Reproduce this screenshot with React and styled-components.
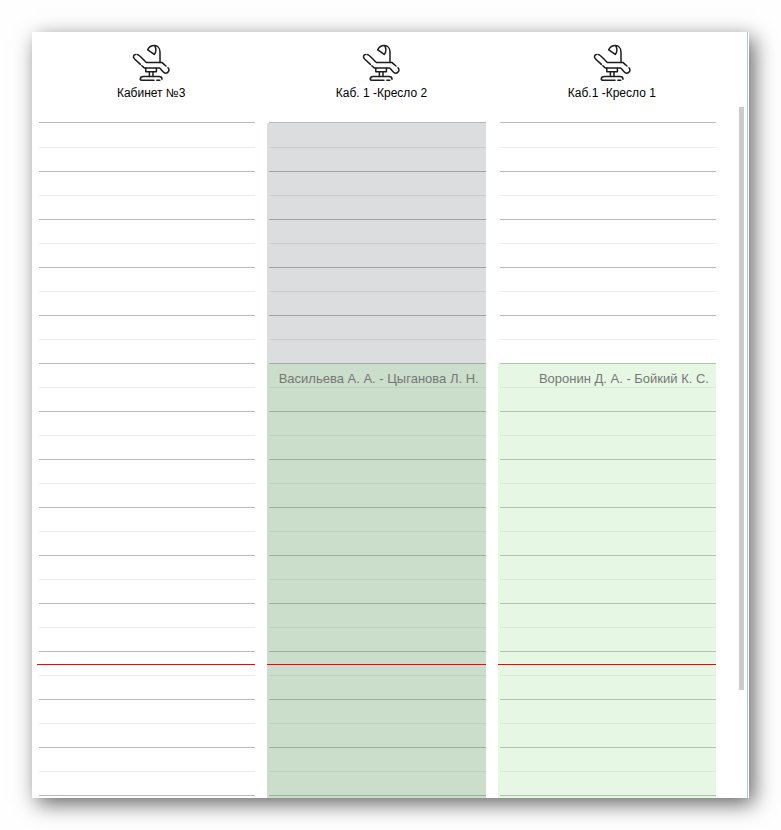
import React from 'react'
import styled, { createGlobalStyle } from 'styled-components'

const GlobalStyle = createGlobalStyle`
    * {
        box-sizing: border-box;
    }
    body {
        margin: 0;
        background-color: #fefefe;
        font-family: "Liberation Sans", Arial, sans-serif;
    }
`
const Page = styled.div`
    height: 100vh;
    padding: 32px;
`
const Panel = styled.main`
    height: 100%;
    display: flex;
    flex-direction: column;
    overflow: hidden;
    background-color: white;
    box-shadow: 5px 6px 20px rgba(0, 0, 0, 0.6);
`
const Inner = styled.div`
    flex: 1;
    min-height: 0;
    display: flex;
    flex-direction: column;
    margin-right: 1px;
    border-right: 1px solid #a9c8ee;
`
const Header = styled.header`
    height: 75px;
    flex-shrink: 0;
    display: grid;
    grid-template-columns: repeat(3, 1fr);
    gap: 12px;
    padding: 12px 26px 0 10px;
`
const RoomHead = styled.div`
    display: flex;
    flex-direction: column;
    align-items: center;
`
const RoomName = styled.h2`
    margin: 3px 0 0;
    font-size: 12px;
    line-height: 16px;
    font-weight: 400;
    color: black;
    white-space: nowrap;
`
const Body = styled.div`
    flex: 1;
    min-height: 0;
    display: flex;
    justify-content: space-between;
    padding: 0 3px 0 5px;
`
const Board = styled.div`
    flex: 1;
    display: grid;
    grid-template-columns: repeat(3, 1fr);
    gap: 12px;
    padding-top: 15px;
    margin-right: 23px;
`
const Column = styled.section`
    position: relative;
    display: grid;
    align-items: start;
`
const Slots = styled.div`
    grid-area: 1 / 1;
    margin-left: 2px;
    border-top: 1px solid #b8b8b8;
    padding-top: 1px;
`
const Slot = styled.div`
    height: 24px;
    border-bottom: 1px solid ${(props) => (props.$half ? '#ebebeb' : '#b8b8b8')};
`
// shifts are tinted glass over the slot lines
const Shifts = styled.div`
    grid-area: 1 / 1;
    z-index: 1;
    margin-top: 1px;
    background-color: ${(props) => (props.$closed ? 'rgba(22, 28, 35, 0.15)' : 'transparent')};
`
const Shift = styled.div`
    height: ${(props) => props.$height}px;
    padding: 8px 7px 0;
    background-color: ${(props) => (props.$people ? 'rgba(151, 222, 143, 0.24)' : 'transparent')};
    color: #777;
    font-size: 13px;
    line-height: 16px;
    text-align: right;
    white-space: nowrap;
`
const NowLine = styled.div`
    position: absolute;
    z-index: 2;
    left: 0;
    right: 0;
    top: ${(props) => props.$top}px;
    height: 1px;
    background-color: #ff0000;
`
const ScrollTrack = styled.div`
    width: 5px;
`
const ScrollThumb = styled.div`
    height: 84.4%;
    background-color: #cbcbcb;
`

const SLOT_HEIGHT = 24
const SLOT_COUNT = 28
const NOW = 542

const rooms = [
    { name: 'Кабинет №3', shifts: [] },
    {
        name: 'Каб. 1 -Кресло 2',
        closed: true,
        shifts: [
            { id: 1, slots: 10 },
            { id: 2, slots: 19, people: 'Васильева А. А. - Цыганова Л. Н.' },
        ],
    },
    {
        name: 'Каб.1 -Кресло 1',
        shifts: [
            { id: 3, slots: 10 },
            { id: 4, slots: 19, people: 'Воронин Д. А. - Бойкий К. С.' },
        ],
    },
]

const ChairIcon = () => (
    <svg
        width="38"
        height="38"
        viewBox="0 0 38 38"
        fill="none"
        stroke="#1c1c1c"
        strokeWidth="1.5"
        strokeLinecap="round"
        strokeLinejoin="round"
        aria-hidden="true"
    >
        {/* seat */}
        <path d="M5 10.4 C7.2 10.4 8.4 12.4 14.4 18.6 H30.2 C32 20.4 33.4 21.6 34 22" />
        <path d="M36 23.8 C38 26 36.4 29.4 33.2 29.2 C31 28.8 30 26 27.6 24 H12.4 C11.6 23.6 10.6 22.6 9.8 21.8" />
        <path d="M8.4 20.4 L2.6 15 C0.6 13.2 1.4 10.8 3.4 10.4" />
        {/* lamp */}
        <path d="M28 18.4 V8 C28 4.2 25.6 1.7 22.6 1.6 C19.8 1.5 17 3.2 15.8 5.6" />
        <path d="M15.8 5.8 L22.2 10.4 C24.2 8 24.2 4.4 22.8 1.8" />
        {/* stand */}
        <path d="M13.8 24.2 V27.8 H24.4 V24.2" />
        <path d="M17.4 28 V32.4 M21 28 V32.4" />
        <path d="M24.8 36.2 H27.8 M30 35.2 C30 33.6 29 32.6 27 32.6 H11.6 C9.4 32.6 8.2 33.6 8.2 35.2 C8.4 36 9 36.2 10 36.2 H22" />
    </svg>
)

const App = () => {
    return (
        <>
            <GlobalStyle />
            <Page>
                <Panel>
                    <Inner>
                        <Header>
                            {rooms.map((room) => (
                                <RoomHead key={room.name}>
                                    <ChairIcon />
                                    <RoomName>{room.name}</RoomName>
                                </RoomHead>
                            ))}
                        </Header>
                        <Body>
                            <Board>
                                {rooms.map((room) => (
                                    <Column key={room.name}>
                                        <Slots>
                                            {Array.from({ length: SLOT_COUNT }, (_, i) => (
                                                <Slot key={i} $half={i % 2 === 0} />
                                            ))}
                                        </Slots>
                                        <Shifts $closed={room.closed}>
                                            {room.shifts.map((shift) => (
                                                <Shift key={shift.id} $people={shift.people} $height={shift.slots * SLOT_HEIGHT}>
                                                    {shift.people}
                                                </Shift>
                                            ))}
                                        </Shifts>
                                        <NowLine $top={NOW} />
                                    </Column>
                                ))}
                            </Board>
                            <ScrollTrack>
                                <ScrollThumb />
                            </ScrollTrack>
                        </Body>
                    </Inner>
                </Panel>
            </Page>
        </>
    )
}

export default App
